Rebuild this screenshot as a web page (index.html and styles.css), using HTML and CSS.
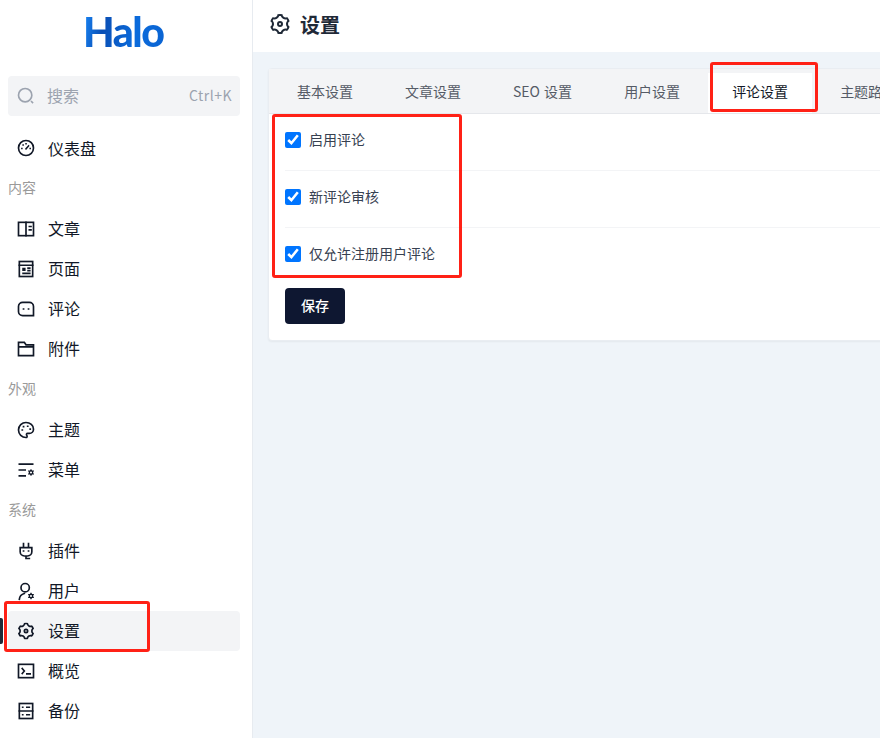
FILE: index.html
```html
<!DOCTYPE html>
<html lang="en">
<head>
    <meta charset="UTF-8">
    <meta name="viewport" content="width=device-width, initial-scale=1.0">
    <title>Halo 设置</title>
    <link rel="stylesheet" href="styles.css">
</head>
<body>
    <svg class="sprite" width="0" height="0">
        <symbol id="gear" viewBox="0 0 24 24">
            <path fill="currentColor" fill-rule="evenodd" d="M3.34 17a10.018 10.018 0 0 1-.978-2.326 3 3 0 0 0 .002-5.347A9.99 9.99 0 0 1 4.865 4.99a3 3 0 0 0 4.631-2.674 9.99 9.99 0 0 1 5.007.002 3 3 0 0 0 4.632 2.672c.579.59 1.093 1.261 1.525 2.01.433.749.757 1.53.978 2.326a3 3 0 0 0-.002 5.347 9.99 9.99 0 0 1-2.501 4.337 3 3 0 0 0-4.631 2.674 9.99 9.99 0 0 1-5.007-.002 3 3 0 0 0-4.632-2.672A10.018 10.018 0 0 1 3.34 17zm5.66.196a4.993 4.993 0 0 1 2.25 2.77c.499.047 1 .048 1.499.001A4.993 4.993 0 0 1 15 17.197a4.993 4.993 0 0 1 3.525-.565c.29-.408.54-.843.748-1.298A4.993 4.993 0 0 1 18 12c0-1.26.47-2.437 1.273-3.334a8.126 8.126 0 0 0-.75-1.298A4.993 4.993 0 0 1 15 6.804a4.993 4.993 0 0 1-2.25-2.77c-.499-.047-1-.048-1.499-.001A4.993 4.993 0 0 1 9 6.803a4.993 4.993 0 0 1-3.525.565 7.99 7.99 0 0 0-.748 1.298A4.993 4.993 0 0 1 6 12c0 1.26-.47 2.437-1.273 3.334a8.126 8.126 0 0 0 .75 1.298A4.993 4.993 0 0 1 9 17.196zM12 15a3 3 0 1 1 0-6 3 3 0 0 1 0 6zm0-2a1 1 0 1 0 0-2 1 1 0 0 0 0 2z"/>
        </symbol>
        <symbol id="mini-gear" viewBox="0 0 24 24">
            <path fill="currentColor" fill-rule="evenodd" d="M12 1l3 5h6l-3 6 3 6h-6l-3 5-3-5H3l3-6-3-6h6zm0 8a3 3 0 1 0 0 6 3 3 0 0 0 0-6z"/>
        </symbol>
    </svg>

    <div class="app">
        <aside class="sidebar">
            <div class="logo">Halo</div>
            <div class="search">
                <svg class="search-icon" viewBox="0 0 24 24"><circle cx="11" cy="11" r="8"/><path d="M18 18l2.500 2.500"/></svg>
                <span class="search-text">搜索</span>
                <span class="search-key">Ctrl+K</span>
            </div>
            <nav class="menu">
                <a class="item">
                    <svg class="icon" viewBox="0 0 24 24"><circle cx="12" cy="12" r="9"/><path class="thin" d="M12 13l3-3.500M7 12.500h.1M8.500 8.500h.1M12 7h.1M17 12.500h.1"/></svg>
                    <span>仪表盘</span>
                </a>
                <div class="group">内容</div>
                <a class="item">
                    <svg class="icon" viewBox="0 0 24 24"><rect x="3" y="4" width="18" height="16"/><path d="M12 4v16M16 9h2M16 13h2"/></svg>
                    <span>文章</span>
                </a>
                <a class="item">
                    <svg class="icon" viewBox="0 0 24 24"><rect x="4" y="3" width="16" height="18"/><path d="M4 7.500h16M8.500 11.500h2v2h-2zM14.500 11h2M14.500 14h2M8.500 17.200h8"/></svg>
                    <span>页面</span>
                </a>
                <a class="item">
                    <svg class="icon" viewBox="0 0 24 24"><path d="M8 4h8a5 5 0 0 1 5 5v11H8a5 5 0 0 1-5-5V9a5 5 0 0 1 5-5z"/><path d="M9 12h.1M15 12h.1"/></svg>
                    <span>评论</span>
                </a>
                <a class="item">
                    <svg class="icon" viewBox="0 0 24 24"><path d="M3 4h7l2 3h9v13H3zM3 9.500h18"/></svg>
                    <span>附件</span>
                </a>
                <div class="group">外观</div>
                <a class="item">
                    <svg class="icon" viewBox="0 0 24 24"><path d="M12 3c5 0 9 3.600 9 8 0 2.800-2.200 5-5 5h-2a1.500 1.500 0 0 0-1 2.600c.8 1 .2 2.400-1 2.400a9 9 0 0 1 0-18z"/><path d="M7.500 12h.1M9 8h.1M14 7.500h.1M17 11h.1"/></svg>
                    <span>主题</span>
                </a>
                <a class="item">
                    <svg class="icon" viewBox="0 0 24 24"><path d="M4 5h16M4 12h7M4 19h7"/><use href="#mini-gear" x="13" y="10" width="10" height="10"/></svg>
                    <span>菜单</span>
                </a>
                <div class="group">系统</div>
                <a class="item">
                    <svg class="icon" viewBox="0 0 24 24"><path d="M9 3v5M15 3v5M5 8h14v5a5 5 0 0 1-5 5h-4a5 5 0 0 1-5-5zM12 18v3h4M9 12h.1M15 12h.1"/></svg>
                    <span>插件</span>
                </a>
                <a class="item">
                    <svg class="icon" viewBox="0 0 24 24"><circle cx="11" cy="8" r="5"/><path d="M4 22a8 8 0 0 1 6-7"/><use href="#mini-gear" x="13" y="13" width="10" height="10"/></svg>
                    <span>用户</span>
                </a>
                <a class="item active">
                    <svg class="icon gear"><use href="#gear"/></svg>
                    <span>设置</span>
                </a>
                <a class="item">
                    <svg class="icon" viewBox="0 0 24 24"><rect x="3" y="4" width="18" height="16"/><path d="M7.500 9l2.500 3-2.500 3M13 15.500h4"/></svg>
                    <span>概览</span>
                </a>
                <a class="item">
                    <svg class="icon" viewBox="0 0 24 24"><rect x="4" y="3" width="16" height="18"/><path d="M4 12h16M8 7.500h.1M8 16.500h.1M13 7.500h3M13 16.500h3"/></svg>
                    <span>备份</span>
                </a>
            </nav>
        </aside>

        <main class="main">
            <header class="topbar">
                <svg class="topbar-icon"><use href="#gear"/></svg>
                <h1>设置</h1>
            </header>
            <div class="content">
                <section class="card">
                    <div class="tabs">
                        <div class="tab">基本设置</div>
                        <div class="tab">文章设置</div>
                        <div class="tab">SEO 设置</div>
                        <div class="tab">用户设置</div>
                        <div class="tab current">评论设置</div>
                        <div class="tab">主题路由设置</div>
                    </div>
                    <form class="form">
                        <label class="row"><input type="checkbox" checked> <span>启用评论</span></label>
                        <label class="row"><input type="checkbox" checked> <span>新评论审核</span></label>
                        <label class="row"><input type="checkbox" checked> <span>仅允许注册用户评论</span></label>
                        <button class="save" type="button">保存</button>
                    </form>
                </section>
            </div>
        </main>
    </div>

    <div class="mark mark-tab"></div>
    <div class="mark mark-form"></div>
    <div class="mark mark-nav"></div>
</body>
</html>
```

FILE: styles.css
```css
* {
    box-sizing: border-box;
}
html, body {
    height: 100%;
}
body {
    margin: 0;
    overflow: hidden;
    font-family: "Noto Sans CJK SC", "Noto Sans", sans-serif;
    color: #1f2937;
    background: #fff;
}
.sprite {
    position: absolute;
}
.app {
    display: flex;
    height: 738px;
}

/* sidebar */
.sidebar {
    flex: 0 0 253px;
    border-right: 1px solid #e7ebf0;
    background: #fff;
}
.logo {
    width: 84px;
    height: 76px;
    margin-left: 83px;
    padding: 6px 0 0;
    font-family: Lato, sans-serif;
    font-size: 41px;
    line-height: 52px;
    font-weight: 900;
    letter-spacing: -1.5px;
    white-space: nowrap;
    background: linear-gradient(100deg, #1a8dff 0%, #0a4fb5 25%, #0b6bdc 60%, #0a62d0 100%);
    -webkit-background-clip: text;
    background-clip: text;
    color: transparent;
}
.search {
    display: flex;
    align-items: center;
    height: 40px;
    margin: 0 12px 0 8px;
    padding: 0 8px;
    border-radius: 4px;
    background: #f3f4f6;
    color: #9ca3af;
}
.search-icon {
    width: 20px;
    height: 20px;
    margin-right: 11px;
    fill: none;
    stroke: #9ca3af;
    stroke-width: 2;
}
.search-text {
    flex: 1;
    font-size: 16px;
    line-height: 38px;
    height: 40px;
}
.search-key {
    font-size: 14px;
    letter-spacing: 0.5px;
    line-height: 38px;
    height: 40px;
}
.menu {
    padding: 12px 12px 0 8px;
}
.item {
    position: relative;
    display: flex;
    align-items: center;
    gap: 12px;
    height: 40px;
    padding-left: 8px;
    border-radius: 4px;
    font-size: 16px;
    color: #111827;
}
.item span {
    padding-bottom: 2px;
}
.item:first-child span {
    padding-bottom: 0;
}
.item.active {
    background: #f3f4f6;
}
.item.active::before {
    content: "";
    position: absolute;
    left: -8px;
    top: 7px;
    width: 3px;
    height: 26px;
    border-radius: 0 2px 2px 0;
    background: #1f2937;
}
.icon {
    width: 20px;
    height: 20px;
    flex: none;
    fill: none;
    stroke: #111827;
    stroke-width: 2;
    stroke-linecap: square;
    color: #111827;
}
.icon use {
    stroke: none;
}
.icon .thin {
    stroke-width: 1.8;
}
.icon.gear {
    stroke: none;
}
.group {
    height: 41px;
    font-size: 14px;
    line-height: 38px;
    color: #9a9a9a;
}

/* main */
.main {
    flex: 1;
    min-width: 0;
    background: #eff4f9;
}
.topbar {
    display: flex;
    align-items: center;
    gap: 8px;
    height: 52px;
    padding: 0 0 4px 15px;
    background: #fff;
}
.topbar-icon {
    width: 24px;
    height: 24px;
    color: #1f2937;
}
.topbar h1 {
    margin: 0;
    font-size: 20px;
    font-weight: 700;
    color: #1f2937;
}
.content {
    padding: 16px 0 0 15px;
}
.card {
    width: 700px;
    height: 273px;
    border: 1px solid #e9edf2;
    border-radius: 4px;
    background: #fff;
    box-shadow: 0 1px 2px rgba(0, 0, 0, 0.05);
}
.tabs {
    display: flex;
    gap: 4px;
    height: 45px;
    padding: 4px 0 0 4px;
    border-bottom: 1px solid #e5e7eb;
    background: #f3f4f6;
}
.tab {
    height: 40px;
    padding: 0 24px;
    font-size: 14px;
    line-height: 36px;
    white-space: nowrap;
    word-spacing: 1px;
    color: #555b66;
}
.tab.current {
    background: #fff;
    color: #111827;
}
.form {
    padding: 0 16px;
}
.row {
    display: flex;
    align-items: center;
    gap: 8px;
    height: 57px;
    padding-bottom: 4px;
    border-bottom: 1px solid #f3f4f6;
    font-size: 14px;
    color: #374151;
}
.row span {
    padding-bottom: 2px;
}
.row:last-of-type {
    border-bottom-color: transparent;
}
.row input {
    width: 16px;
    height: 16px;
    margin: 0;
}
.save {
    display: block;
    width: 60px;
    height: 36px;
    margin-top: 3px;
    padding: 0 0 2px;
    border: none;
    border-radius: 4px;
    background: #0e1731;
    color: #fff;
    font-family: inherit;
    font-size: 14px;
    font-weight: 500;
}

/* red annotation boxes drawn over the screenshot */
.mark {
    position: absolute;
    border: 3px solid #ff2116;
    border-radius: 3px;
}
.mark-tab {
    left: 710px;
    top: 62px;
    width: 108px;
    height: 50px;
}
.mark-form {
    left: 272px;
    top: 114px;
    width: 190px;
    height: 164px;
}
.mark-nav {
    left: 4px;
    top: 601px;
    width: 146px;
    height: 51px;
}
```
